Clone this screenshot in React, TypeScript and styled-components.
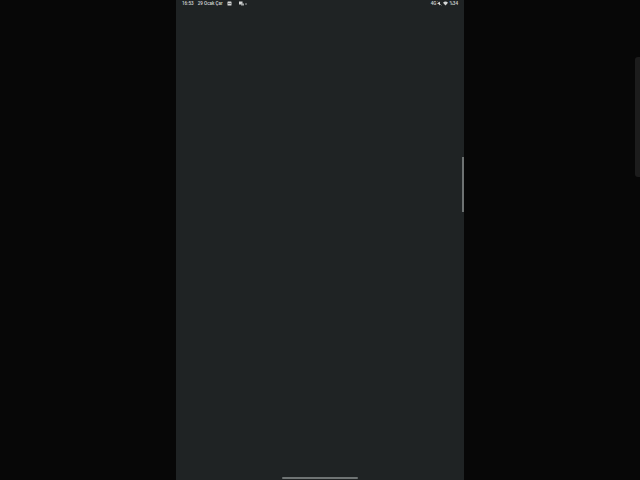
import React from 'react';
import styled, { createGlobalStyle } from 'styled-components';

const GlobalStyle = createGlobalStyle`
  html, body {
    margin: 0;
    padding: 0;
    height: 100%;
    background: #070707;
    overflow: hidden;
  }
  #root {
    height: 100%;
  }
`;

const Stage = styled.div`
  position: relative;
  display: flex;
  justify-content: center;
  width: 640px;
  height: 480px;
  background: #070707;
`;

const Phone = styled.div`
  position: relative;
  display: flex;
  flex-direction: column;
  width: 288px;
  height: 480px;
  background: #1f2324;
  font-family: 'Roboto', 'Liberation Sans', sans-serif;
`;

const StatusBar = styled.div`
  display: flex;
  align-items: center;
  justify-content: space-between;
  height: 7px;
  padding: 0 6px;
  color: #d4d6d6;
  font-size: 4.6px;
  font-weight: 500;
  line-height: 7px;
`;

const StatusGroup = styled.div<{ $gap: number }>`
  display: flex;
  align-items: center;
  gap: ${(props) => props.$gap}px;
`;

const NotificationIcons = styled(StatusGroup)`
  margin-left: 3px;
`;

const Content = styled.div`
  flex: 1;
`;

const HomeRow = styled.div`
  display: flex;
  justify-content: center;
  padding-bottom: 1px;
`;

const HomeBar = styled.div`
  width: 76px;
  height: 2px;
  border-radius: 1px;
  background: #6f7474;
`;

const ScrollHandle = styled.div`
  position: absolute;
  top: 157px;
  right: 0;
  width: 2px;
  height: 55px;
  background: #6d7272;
`;

const SidePanelHandle = styled.div`
  position: absolute;
  top: 57px;
  right: 0;
  width: 5px;
  height: 120px;
  border-radius: 3px 0 0 3px;
  background: #1c1c1c;
`;

const CalendarIcon = () => (
  <svg width="5" height="5" viewBox="0 0 10 10">
    <rect x="1" y="1" width="8" height="8" rx="1" fill="#d4d6d6" />
    <rect x="2" y="4" width="6" height="1" fill="#1f2324" />
  </svg>
);

const PhotoIcon = () => (
  <svg width="5" height="5" viewBox="0 0 10 10">
    <rect x="0" y="1" width="7" height="6" fill="#d4d6d6" />
    <rect x="4" y="5" width="6" height="4" fill="#a4a8a8" />
  </svg>
);

const Dot = () => (
  <svg width="2" height="2" viewBox="0 0 2 2">
    <circle cx="1" cy="1" r="0.7" fill="#d4d6d6" />
  </svg>
);

const MuteIcon = () => (
  <svg width="5" height="5" viewBox="0 0 10 10">
    <path d="M1 4h2l3-3v8L3 6H1z" fill="#d4d6d6" />
    <path d="M1 1l8 8" stroke="#d4d6d6" strokeWidth="1" />
  </svg>
);

const WifiIcon = () => (
  <svg width="5" height="5" viewBox="0 0 10 10">
    <path d="M0 3.5a7 7 0 0 1 10 0L5 9z" fill="#d4d6d6" />
  </svg>
);

export default function App() {
  return (
    <Stage>
      <GlobalStyle />
      <Phone>
        <StatusBar>
          <StatusGroup $gap={4}>
            <span>16:53</span>
            <span>29 Ocak Çar</span>
            <CalendarIcon />
            <NotificationIcons $gap={1}>
              <PhotoIcon />
              <Dot />
            </NotificationIcons>
          </StatusGroup>
          <StatusGroup $gap={1}>
            <span>4G</span>
            <MuteIcon />
            <WifiIcon />
            <span>%34</span>
          </StatusGroup>
        </StatusBar>
        <Content />
        <HomeRow>
          <HomeBar />
        </HomeRow>
        <ScrollHandle />
      </Phone>
      <SidePanelHandle />
    </Stage>
  );
}
